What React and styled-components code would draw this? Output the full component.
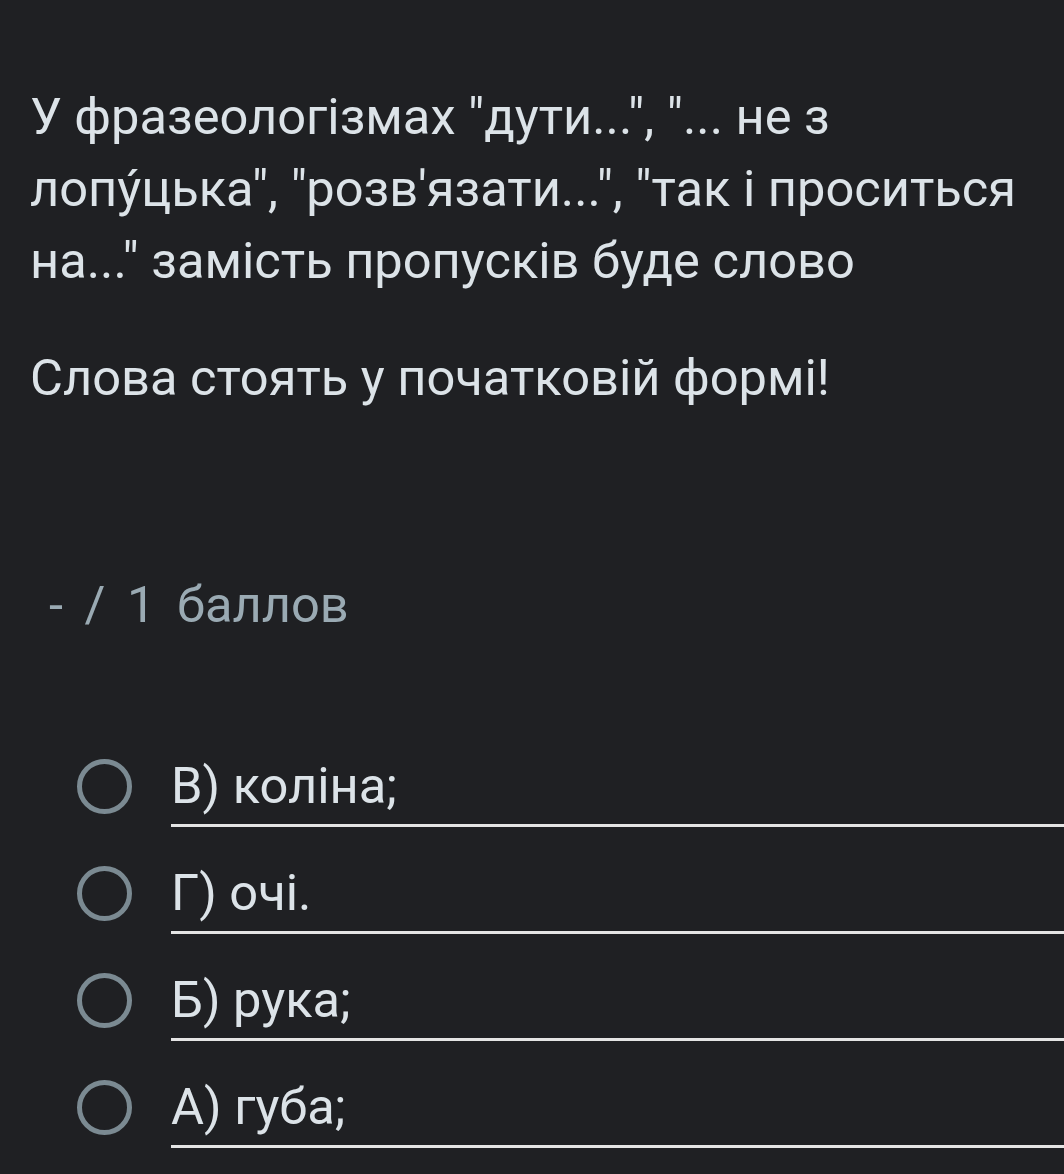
import React from 'react';
import styled, { createGlobalStyle } from 'styled-components';

const GlobalStyle = createGlobalStyle`
  html, body {
    margin: 0;
    padding: 0;
    background: #1f2023;
  }
  body {
    font-family: Roboto, "Noto Sans", "Liberation Sans", sans-serif;
  }
`;

const options = ['В) коліна;', 'Г) очі.', 'Б) рука;', 'А) губа;'];

const App = () => {
  return (
    <>
      <GlobalStyle />
      <Page>
        <Question>
          У фразеологізмах "дути...", "... не з лопу́цька", "розв'язати...", "так і проситься на..." замість пропусків буде слово
        </Question>
        <Hint>Слова стоять у початковій формі!</Hint>
        <Score>- / 1 баллов</Score>
        <OptionList>
          {options.map((o) => (
            <OptionRow key={o}>
              <RadioWrap>
                <Radio />
              </RadioWrap>
              <OptionLabel>{o}</OptionLabel>
            </OptionRow>
          ))}
        </OptionList>
      </Page>
    </>
  );
};

const Page = styled.div`
  width: 1064px;
  height: 1174px;
  overflow: hidden;
  box-sizing: border-box;
  padding: 81px 20px 0 30px;
  color: #dce3e8;
`;

const Question = styled.p`
  margin: 0;
  font-size: 50.6px;
  line-height: 72px;
`;

const Hint = styled.p`
  margin: 45px 0 0;
  font-size: 50.6px;
  line-height: 72px;
`;

const Score = styled.div`
  margin: 155px 0 0 19px;
  font-size: 50.6px;
  line-height: 72px;
  color: #9aaab3;
  word-spacing: 9px;
`;

const OptionList = styled.div`
  margin: 109px -20px 0 47px;
  display: flex;
  flex-direction: column;
  gap: 30px;
`;

const OptionRow = styled.div`
  display: flex;
  align-items: flex-start;
  gap: 39px;
`;

const RadioWrap = styled.div`
  height: 72px;
  display: flex;
  align-items: center;
`;

const Radio = styled.span`
  display: block;
  width: 55px;
  height: 55px;
  box-sizing: border-box;
  border-radius: 50%;
  border: 5px solid #7b8a92;
`;

const OptionLabel = styled.div`
  flex: 1;
  font-size: 50.6px;
  line-height: 72px;
  padding-bottom: 2px;
  border-bottom: 3px solid #e4e4e4;
  color: #dce3e8;
`;

export default App;
